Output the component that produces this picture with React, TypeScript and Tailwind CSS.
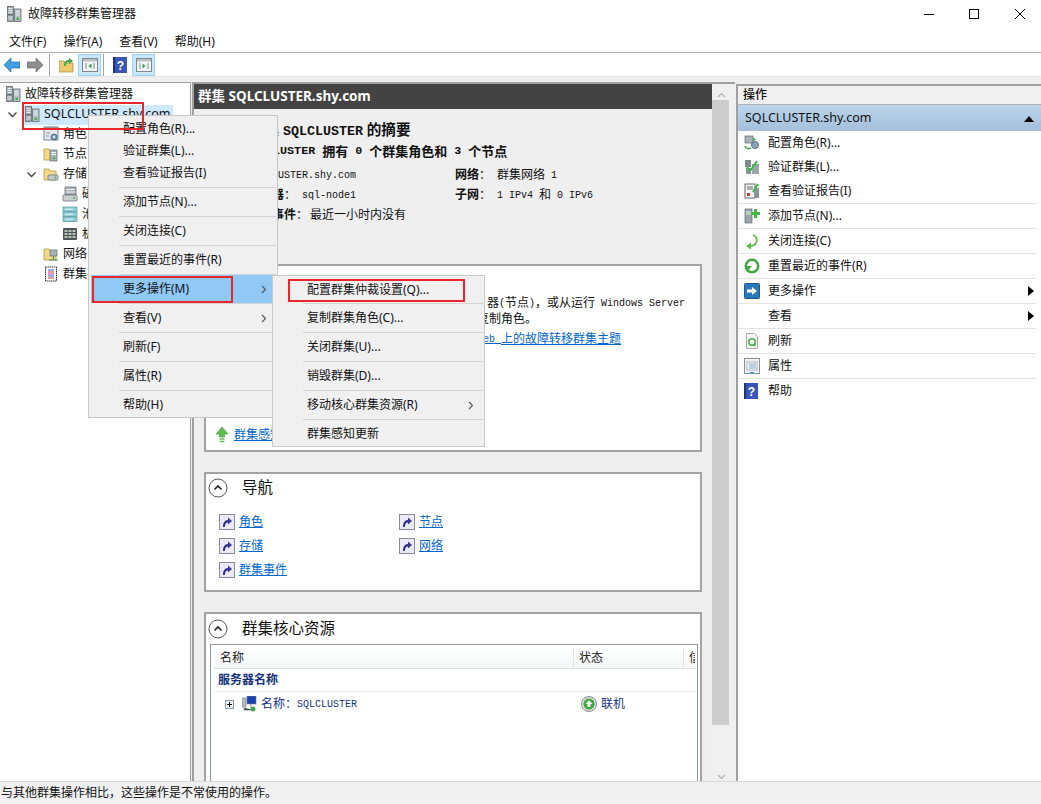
import React from "react";

const Srv = ({ s = 16 }: { s?: number }) => (
  <svg width={s} height={s} viewBox="0 0 16 16">
    <rect x="1.500" y=".5" width="6" height="8" fill="#a5aeb3" stroke="#5f6a70" strokeWidth=".8" />
    <rect x="8.500" y="3" width="6.500" height="12.500" fill="#b8c0c4" stroke="#5f6a70" strokeWidth=".8" />
    <rect x="1.500" y="9" width="6" height="6.500" fill="#9fa8ad" stroke="#5f6a70" strokeWidth=".8" />
    <path d="M2.500 2.500h4M2.500 4.500h4M2.500 6.500h4M9.500 5h4.500M9.500 7h4.500M9.500 9h4.500M2.500 11h4M2.500 13h4" stroke="#eef2f4" strokeWidth=".9" />
    <rect x="10.500" y="11.500" width="2.500" height="2.500" fill="#4caf50" />
  </svg>
);
const Folder = ({ children }: { children?: React.ReactNode }) => (
  <svg width="16" height="16" viewBox="0 0 16 16">
    <path d="M1 3h5l1 2h6v9H1z" fill="#f2d98a" stroke="#b9973f" strokeWidth=".8" />
    {children}
  </svg>
);
const FolderSrv = () => (
  <Folder>
    <rect x="7" y="4" width="7" height="11" fill="#a8b3b8" stroke="#5f6a70" strokeWidth=".7" />
    <path d="M8 6.500h5M8 8.500h5" stroke="#eef2f4" />
    <rect x="10" y="11" width="2" height="2" fill="#4caf50" />
  </Folder>
);
const FolderDisk = () => (
  <Folder>
    <rect x="5" y="9" width="10" height="5" rx="1" fill="#c5cbce" stroke="#5f6a70" strokeWidth=".7" />
    <circle cx="12.500" cy="11.500" r=".9" fill="#4caf50" />
  </Folder>
);
const Roles = () => (
  <svg width="16" height="16" viewBox="0 0 16 16">
    <rect x="1" y="1" width="14" height="13" fill="#e5e9ec" stroke="#7c878d" />
    <rect x="1" y="1" width="14" height="3" fill="#8b969c" />
    <circle cx="11" cy="11" r="3" fill="#7aa0c0" stroke="#4b6e8c" />
    <circle cx="11" cy="11" r="1" fill="#fff" />
    <path d="M3 7h4M3 10h3" stroke="#8b969c" />
  </svg>
);
const Disks = () => (
  <svg width="16" height="16" viewBox="0 0 16 16">
    <rect x="3" y="1" width="11" height="8" fill="#a8b0b5" stroke="#5f6a70" strokeWidth=".7" />
    <path d="M4 3.500h9M4 6h9" stroke="#eef2f4" />
    <rect x="1" y="9" width="14" height="6" rx="1" fill="#c9ced1" stroke="#5f6a70" strokeWidth=".7" />
    <circle cx="12" cy="12" r="1" fill="#4caf50" />
  </svg>
);
const Pools = () => (
  <svg width="16" height="16" viewBox="0 0 16 16">
    {[1, 6, 11].map((y) => (
      <g key={y}>
        <rect x="1" y={y} width="14" height="4.500" fill="#8fcbd4" stroke="#5c9aa6" strokeWidth=".7" />
        <path d={`M3 ${y + 2.2}h8`} stroke="#e7f6f8" />
      </g>
    ))}
  </svg>
);
const Enclosure = () => (
  <svg width="16" height="16" viewBox="0 0 16 16">
    <rect x="1" y="2" width="14" height="12" rx="1" fill="#4e5558" />
    {[3, 7, 11].map((x) =>
      [4, 7, 10].map((y) => <rect key={`${x}${y}`} x={x - 0.5} y={y} width="3" height="2" fill="#b9c2b2" />)
    )}
  </svg>
);
const FolderNet = () => (
  <Folder>
    <rect x="7" y="4" width="7" height="6" fill="#a8b3b8" stroke="#5f6a70" strokeWidth=".7" />
    <path d="M10.500 10v3M6 14h9" stroke="#3e9a4a" strokeWidth="1.200" />
  </Folder>
);
const Events = () => (
  <svg width="16" height="16" viewBox="0 0 16 16">
    <rect x="2.500" y="1" width="11" height="14" fill="#fff" stroke="#333" strokeDasharray="1.500 .6" />
    <path d="M5 4h6" stroke="#3a5fc8" />
    <path d="M5 6h6" stroke="#d0392f" />
    <path d="M5 8h6" stroke="#b03ab0" />
    <path d="M5 10h6" stroke="#3a5fc8" />
    <path d="M5 12h6" stroke="#d0392f" />
  </svg>
);
const Chevron = ({ right = false }: { right?: boolean }) => (
  <svg width="9" height="9" viewBox="0 0 9 9">
    {right ? (
      <path d="M3 1l3.500 3.500L3 8" fill="none" stroke="#555" strokeWidth="1.100" />
    ) : (
      <path d="M.5 2.500L4.500 6.500 8.500 2.500" fill="none" stroke="#444" strokeWidth="1.400" />
    )}
  </svg>
);
const Pane = ({ dir }: { dir: "l" | "r" }) => (
  <svg width="16" height="14" viewBox="0 0 16 14">
    <rect x=".5" y=".5" width="15" height="13" fill="#f4f6f7" stroke="#7c878d" />
    <rect x="1" y="1" width="14" height="2.500" fill="#b7c1c6" />
    <path d="M3 6h2M3 8h2M3 10h2M11 6h2M11 8h2M11 10h2" stroke="#7c878d" />
    <path d={dir === "l" ? "M9.500 5.500v5L6.500 8z" : "M6.500 5.500v5L9.500 8z"} fill="#2fa043" />
  </svg>
);
const Help = () => (
  <svg width="14" height="16" viewBox="0 0 14 16">
    <rect width="14" height="16" fill="#3a55b8" />
    <rect x="0" y="0" width="2" height="16" fill="#22337c" />
    <text x="7.500" y="12.500" fontSize="12" fontWeight="700" fill="#fff" textAnchor="middle" fontFamily="Liberation Sans">?</text>
  </svg>
);
const ToolBtn = ({ dir }: { dir: "l" | "r" }) => (
  <div className="flex h-[22px] w-[23px] items-center justify-center border border-[#99d1ff] bg-[#cce8ff]">
    <Pane dir={dir} />
  </div>
);
const Sep = () => <div className="h-[22px] w-px bg-[#a0a0a0]" />;

const TreeRow = ({ pad, chev, icon, label, big }: { pad: string; chev?: boolean; icon: React.ReactNode; label: string; big?: boolean }) => (
  <div className={`flex h-5 items-center whitespace-nowrap ${pad}`}>
    {chev !== undefined && (
      <span className="mr-[7px] flex w-[10px] justify-center">{chev && <Chevron />}</span>
    )}
    <span className="flex w-4 shrink-0">{icon}</span>
    <span className={`ml-[4px] flex h-5 items-center text-[#111] ${big ? "text-[12.5px]" : "text-[12px]"}`}>{label}</span>
  </div>
);

const MenuRow = ({ label, arrow, hl, sep = true, h = "h-[28px]" }: { label: string; arrow?: boolean; hl?: boolean; sep?: boolean; h?: string }) => (
  <>
    <div className={`mx-[2px] flex items-center justify-between pl-[32px] pr-[7px] text-[12px] text-[#111] ${h} ${hl ? "bg-[#90c8f6]" : ""}`}>
      <span>{label}</span>
      {arrow && <Chevron right />}
    </div>
    {sep && <div className="ml-[30px] mr-[1px] h-px bg-[#d4d4d4]" />}
  </>
);

const Mono = ({ children, b }: { children: React.ReactNode; b?: boolean }) => (
  <span className={`font-['Liberation_Mono',monospace] ${b ? "text-[11.7px] font-bold" : "text-[10px]"}`}>{children}</span>
);

const Collapse = () => (
  <svg width="20" height="20" viewBox="0 0 20 20">
    <circle cx="10" cy="10" r="9" fill="#fff" stroke="#555" />
    <path d="M6.500 11.500L10 8l3.500 3.500" fill="none" stroke="#222" strokeWidth="1.600" />
  </svg>
);
const CardHead = ({ title }: { title: string }) => (
  <div className="flex h-[26px] items-center pl-[1px] text-[15.5px] text-[#111]">
    <Collapse />
    <span className="ml-[14px]">{title}</span>
  </div>
);
const Shortcut = () => (
  <svg width="16" height="16" viewBox="0 0 16 16">
    <rect x=".5" y=".5" width="15" height="15" fill="#eceaf6" stroke="#8a8a94" />
    <path d="M4 13c0-5 2-7 5-7V3.500L13 7l-4 3.500V8.500c-2 0-3 1.500-3 4.500z" fill="#37378f" />
  </svg>
);
const NavLink = ({ label }: { label: string }) => (
  <div className="flex h-6 items-center">
    <Shortcut />
    <a className="ml-[4px] text-[12px] text-[#0066cc] underline">{label}</a>
  </div>
);

const Act = ({ icon, label, arrow, sep = true }: { icon?: React.ReactNode; label: string; arrow?: boolean; sep?: boolean }) => (
  <>
    <div className="flex h-[24px] items-center pl-[6px] pr-[7px] text-[12px] text-[#111]">
      <span className="flex w-4 shrink-0">{icon}</span>
      <span className="ml-[8px] flex-1">{label}</span>
      {arrow && (
        <svg width="6" height="10" viewBox="0 0 6 10">
          <path d="M0 0l6 5-6 5z" fill="#000" />
        </svg>
      )}
    </div>
    {sep && <div className="mr-[5px] h-px bg-[#e3e3e3]" />}
  </>
);

const A = {
  role: (
    <svg width="16" height="16" viewBox="0 0 16 16">
      <rect x="1" y="1" width="8" height="7" fill="#a8b3b8" stroke="#5f6a70" strokeWidth=".7" />
      <circle cx="11" cy="10" r="3.500" fill="#8ba4b8" stroke="#566f82" />
      <path d="M1 11c1 3 4 3 6 2" fill="none" stroke="#3ea84b" strokeWidth="1.600" />
      <path d="M9 2.500l3 2-3 2z" fill="#3ea84b" />
    </svg>
  ),
  val: (
    <svg width="16" height="16" viewBox="0 0 16 16">
      <rect x="1" y="1" width="6" height="7" fill="#7f8a90" />
      <rect x="8" y="5" width="7" height="10" fill="#9aa4a9" />
      <rect x="2" y="9" width="5" height="6" fill="#8a959a" />
      <path d="M3 8l3 4 7-10" fill="none" stroke="#3fb54a" strokeWidth="2" />
    </svg>
  ),
  rep: (
    <svg width="16" height="16" viewBox="0 0 16 16">
      <rect x="1" y="1" width="10" height="14" fill="#f5f5f5" stroke="#666" />
      <path d="M3 4h6M3 6h6" stroke="#666" />
      <rect x="3" y="10" width="3" height="3" fill="#d0392f" />
      <rect x="10" y="5" width="5" height="10" fill="#8a959a" />
      <path d="M9 9l5-8" stroke="#3fb54a" strokeWidth="2" />
    </svg>
  ),
  add: (
    <svg width="16" height="16" viewBox="0 0 16 16">
      <rect x="1" y="1" width="7" height="14" fill="#9aa4a9" stroke="#5f6a70" strokeWidth=".7" />
      <path d="M2 4h5M2 6h5" stroke="#eef2f4" />
      <path d="M10 1h3v3h3v3h-3v3h-3V7H7V4h3z" fill="#43b649" />
    </svg>
  ),
  close: (
    <svg width="16" height="16" viewBox="0 0 16 16">
      <path d="M9 2c3 1 5 4 3 8-1 2-3 3-6 3" fill="none" stroke="#5dbb46" strokeWidth="1.700" />
      <path d="M7 9.500v7L2 13z" fill="#5dbb46" />
    </svg>
  ),
  reset: (
    <svg width="16" height="16" viewBox="0 0 16 16">
      <circle cx="8" cy="8" r="6.200" fill="none" stroke="#43a93f" strokeWidth="2.600" />
      <path d="M1 8h7L3 14z" fill="#43a93f" />
      <path d="M6 8l4-4" stroke="#fff" />
    </svg>
  ),
  more: (
    <svg width="16" height="16" viewBox="0 0 16 16">
      <rect x=".5" y=".5" width="15" height="15" rx="1" fill="#2b78b8" stroke="#1b5a8f" />
      <path d="M3 6.500h5V4l5 4-5 4V9.500H3z" fill="#fff" />
    </svg>
  ),
  refresh: (
    <svg width="16" height="16" viewBox="0 0 16 16">
      <path d="M2.500.5h8l3 3v12h-11z" fill="#f6f6f6" stroke="#aaa" />
      <circle cx="8" cy="9" r="3.200" fill="none" stroke="#49b04a" strokeWidth="1.600" />
      <path d="M9 12l3-1-1 3z" fill="#49b04a" />
    </svg>
  ),
  prop: (
    <svg width="16" height="16" viewBox="0 0 16 16">
      <rect x=".5" y=".5" width="15" height="15" fill="#eef1f3" stroke="#8a8f94" />
      <rect x="3" y="4" width="10" height="8" fill="#fff" stroke="#b0b6bb" />
      <path d="M5 6h7M5 8h7M5 10h7" stroke="#7f9fbf" />
      <rect x="6" y="14" width="4" height="1" fill="#35a0e0" />
    </svg>
  ),
};

const Red = ({ pos }: { pos: string }) => (
  <div className={`pointer-events-none absolute border-2 border-[#e8262b] ${pos}`} />
);

export default function App() {
  return (
    <div className="relative flex h-[804px] w-[1041px] flex-col overflow-hidden bg-white font-['Noto_Sans','Noto_Sans_CJK_SC',sans-serif]">
      {/* title bar */}
      <div className="flex h-[28px] items-center pl-[6px] pr-[16px]">
        <Srv />
        <span className="ml-[6px] flex-1 text-[12px] text-[#111]">故障转移群集管理器</span>
        <svg width="101" height="12" viewBox="0 0 101 12">
          <path d="M0 6.500h10" stroke="#000" />
          <rect x="45.500" y="1.500" width="9" height="9" fill="none" stroke="#000" />
          <path d="M91 1l10 10M101 1L91 11" stroke="#000" />
        </svg>
      </div>
      {/* menu */}
      <div className="flex h-[25px] items-center gap-[17px] border-b border-[#b4b4b4] pl-[9px] pt-[3px] text-[12px] text-[#111]">
        <span>文件(F)</span>
        <span>操作(A)</span>
        <span>查看(V)</span>
        <span>帮助(H)</span>
      </div>
      {/* toolbar */}
      <div className="flex h-[23px] items-center pl-[4px]">
        <svg width="16" height="14" viewBox="0 0 16 14">
          <path d="M0 7l7-7v4h9v6H7v4z" fill="#3f9fe0" stroke="#1f6fb0" strokeWidth=".7" />
        </svg>
        <svg className="ml-[7px]" width="16" height="14" viewBox="0 0 16 14">
          <path d="M16 7L9 0v4H0v6h9v4z" fill="#8f8f8f" stroke="#666" strokeWidth=".7" />
        </svg>
        <div className="ml-[6px]"><Sep /></div>
        <div className="ml-[9px] flex w-[15px]">
          <svg width="15" height="16" viewBox="0 0 15 16">
            <path d="M0 4h5l1 2h8v9H0z" fill="#ecca6e" stroke="#a9853a" strokeWidth=".7" />
            <path d="M5 9c0-4 2-6 5-6V1l4 3-4 3V5C8 5 7 7 6.500 9z" fill="#3da83f" />
          </svg>
        </div>
        <div className="ml-[4px]"><ToolBtn dir="l" /></div>
        <div className="ml-[2px]"><Sep /></div>
        <div className="ml-[9px] flex"><Help /></div>
        <div className="ml-[5px]"><ToolBtn dir="r" /></div>
      </div>
      {/* main */}
      <div className="flex min-h-0 flex-1 border-t border-[#e6e6e6] bg-[#f0f0f0] pt-[5px]">
        {/* tree */}
        <div className="w-[191px] shrink-0 border-r border-t border-[#a0a0a0] bg-white pt-[1px]">
          <div className="flex flex-col">
            <TreeRow pad="pl-[5px]" icon={<Srv />} label="故障转移群集管理器" />
            <div className="relative">
              <div className="absolute left-[23px] top-[1px] h-5 w-[150px] bg-[#cde8ff]" />
              <div className="relative">
                <TreeRow pad="pl-[7px]" chev icon={<Srv />} label="SQLCLUSTER.shy.com" big />
              </div>
            </div>
            <TreeRow pad="pl-[26px]" chev={false} icon={<Roles />} label="角色" />
            <TreeRow pad="pl-[26px]" chev={false} icon={<FolderSrv />} label="节点" />
            <TreeRow pad="pl-[26px]" chev icon={<FolderDisk />} label="存储" />
            <TreeRow pad="pl-[45px]" chev={false} icon={<Disks />} label="磁盘" />
            <TreeRow pad="pl-[45px]" chev={false} icon={<Pools />} label="池" />
            <TreeRow pad="pl-[45px]" chev={false} icon={<Enclosure />} label="机柜" />
            <TreeRow pad="pl-[26px]" chev={false} icon={<FolderNet />} label="网络" />
            <TreeRow pad="pl-[26px]" chev={false} icon={<Events />} label="群集事件" />
          </div>
        </div>
        {/* center */}
        <div className="ml-[1px] flex w-[543px] shrink-0 overflow-hidden border-l-2 border-t-2 border-[#a0a0a0]">
          <div className="flex w-[518px] shrink-0 flex-col">
            <div className="flex h-[25px] shrink-0 items-center bg-[#434343] pl-[4px] text-[13.5px] font-bold text-white">
              群集 SQLCLUSTER.shy.com
            </div>
            <div className="flex flex-col bg-[#efefef] px-[10px]">
              <div className="h-[155px] shrink-0 pl-[8px] text-[12px] text-[#111]">
                <div className="flex h-[20px] items-center pl-[38px] pt-[21px] text-[14.6px] font-bold">
                  <span className="whitespace-nowrap">群集 <span className="font-['Liberation_Mono',monospace] text-[13.33px]">SQLCLUSTER</span> 的摘要</span>
                </div>
                <div className="mt-[12px] flex h-[20px] items-center whitespace-nowrap text-[13px] font-bold">
                  群集<Mono b>&nbsp;SQLCLUSTER&nbsp;</Mono>拥有<Mono b>&nbsp;0&nbsp;</Mono>个群集角色和<Mono b>&nbsp;3&nbsp;</Mono>个节点
                </div>
                <div className="mt-[3px] grid grid-cols-[243px_1fr] whitespace-nowrap">
                  <div className="flex h-5 items-center"><b>名称</b>：<Mono>SQLCLUSTER.shy.com</Mono></div>
                  <div className="flex h-5 items-center"><b>网络</b>：<Mono>&nbsp;</Mono>群集网络<Mono>&nbsp;1</Mono></div>
                  <div className="flex h-5 items-center"><b>当前主服务器</b>：<Mono>&nbsp;sql-node1</Mono></div>
                  <div className="flex h-5 items-center"><b>子网</b>：<Mono>&nbsp;1 IPv4&nbsp;</Mono>和<Mono>&nbsp;0 IPv6</Mono></div>
                  <div className="flex h-5 items-center"><b>最近的群集事件</b>：<span className="ml-[2px]">最近一小时内没有</span></div>
                </div>
              </div>
              <div className="h-[188px] shrink-0 border-2 border-[#a3a3a3] bg-white pl-[1px] pt-[3px] text-[12px] text-[#111]">
                <CardHead title="配置" />
                <div className="whitespace-nowrap pl-[270px]">
                  <div className="ml-[10px] flex h-[16px] items-center">器<Mono>(</Mono>节点<Mono>)</Mono>，或从运行<Mono>&nbsp;Windows Server</Mono></div>
                  <div className="flex h-[16px] items-center">复制角色。</div>
                  <div className="mt-[4px] flex h-[16px] items-center text-[#0066cc] underline"><span className="font-['Liberation_Mono',monospace] text-[10px]">Web&nbsp;</span>上的故障转移群集主题</div>
                </div>
                <div className="mt-[79px] flex items-center pl-[8px]">
                  <svg width="14" height="16" viewBox="0 0 14 16">
                    <path d="M7 0l6 7H9.500v3h-5V7H1z" fill="#5cc04c" stroke="#3a9a32" strokeWidth=".6" />
                    <path d="M4.500 12h5M4.500 14.500h5" stroke="#5cc04c" strokeWidth="1.400" />
                  </svg>
                  <a className="ml-[5px] text-[12px] text-[#0066cc] underline">群集感知更新</a>
                </div>
              </div>
              <div className="mt-[20px] h-[120px] shrink-0 border-2 border-[#a3a3a3] bg-white pl-[1px] pt-[1px]">
                <CardHead title="导航" />
                <div className="mt-[9px] grid grid-cols-[180px_1fr] pl-[12px]">
                  <NavLink label="角色" />
                  <NavLink label="节点" />
                  <NavLink label="存储" />
                  <NavLink label="网络" />
                  <NavLink label="群集事件" />
                </div>
              </div>
              <div className="mt-[20px] h-[180px] shrink-0 border-2 border-[#a3a3a3] bg-white pl-[1px] pr-[2px] pt-[2px]">
                <CardHead title="群集核心资源" />
                <div className="ml-[3px] mt-[2px] h-[150px] border border-[#8b979d] pl-[3px] pr-[1px] pt-[3px] text-[12px]">
                  <div className="flex h-[21px] overflow-hidden border-b border-[#d9dfe3] bg-gradient-to-b from-white to-[#f5f6f7] text-[#222]">
                    <div className="flex w-[360px] shrink-0 items-center border-r border-[#e3e3e3] pl-[6px]">名称</div>
                    <div className="flex w-[110px] shrink-0 items-center border-r border-[#e3e3e3] pl-[5px]">状态</div>
                    <div className="flex w-[11px] items-center overflow-hidden whitespace-nowrap pl-[5px]">信息</div>
                  </div>
                  <div className="flex h-[23px] items-center border-b border-[#e6edf2] pl-[4px] font-bold text-[#14337a]">服务器名称</div>
                  <div className="flex h-[24px] items-center text-[#14337a]">
                    <div className="flex w-[360px] items-center pl-[11px]">
                      <span className="flex h-[9px] w-[9px] items-center justify-center border border-[#8a9aa5] bg-[#eef2f5]">
                        <svg width="7" height="7" viewBox="0 0 7 7"><path d="M1 3.500h5M3.500 1v5" stroke="#000" /></svg>
                      </span>
                      <span className="ml-[8px] flex">
                        <svg width="15" height="16" viewBox="0 0 15 16">
                          <rect x="0" y="2" width="4" height="9" fill="#b4bcc0" stroke="#6e7a80" strokeWidth=".6" />
                          <rect x="5" y="0" width="9" height="8" fill="#1c3fb0" stroke="#6e7a80" strokeWidth=".6" />
                          <path d="M2 12v2h10M9 8v4" stroke="#999" />
                          <circle cx="11" cy="13" r="2.500" fill="#3fa84a" />
                        </svg>
                      </span>
                      <span className="ml-[4px] flex items-center">名称：<Mono>SQLCLUSTER</Mono></span>
                    </div>
                    <div className="flex items-center pl-[7px]">
                      <svg width="16" height="16" viewBox="0 0 16 16">
                        <circle cx="8" cy="8" r="7.500" fill="#dcdcdc" stroke="#8f8f8f" />
                        <circle cx="8" cy="8" r="5.500" fill="#3ea83f" />
                        <path d="M8 4l3.500 4H9.500v3h-3V8H4.500z" fill="#fff" />
                      </svg>
                      <span className="ml-[4px]">联机</span>
                    </div>
                  </div>
                </div>
              </div>
            </div>
          </div>
          {/* scrollbar */}
          <div className="flex w-[18px] shrink-0 flex-col bg-[#f0f0f0]">
            <div className="flex h-[14px] items-end justify-center">
              <svg width="9" height="6" viewBox="0 0 9 6"><path d="M1 5l3.500-3.500L8 5" fill="none" stroke="#b0b0b0" strokeWidth="1.200" /></svg>
            </div>
            <div className="mt-[2px] h-[625px] w-[17px] bg-[#cdcdcd]" />
            <div className="mt-[49px] flex justify-center">
              <svg width="9" height="6" viewBox="0 0 9 6"><path d="M1 1l3.500 3.500L8 1" fill="none" stroke="#b0b0b0" strokeWidth="1.200" /></svg>
            </div>
          </div>
        </div>
        {/* actions */}
        <div className="ml-[1px] mt-[2px] flex-1 border-l-2 border-t-2 border-[#a0a0a0] bg-white">
          <div className="flex h-[19px] items-center border-b border-[#b0b0b0] bg-[#f0f0f0] pl-[5px] text-[12px] font-medium text-[#111]">操作</div>
          <div className="flex h-[26px] items-center justify-between bg-gradient-to-b from-[#bcd5ec] to-[#a3bfdb] px-[7px] pt-[1px] text-[12.5px] text-[#111]">
            <span>SQLCLUSTER.shy.com</span>
            <svg width="10" height="6" viewBox="0 0 10 6"><path d="M5 0l5 6H0z" fill="#000" /></svg>
          </div>
          <Act icon={A.role} label="配置角色(R)..." sep={false} />
          <Act icon={A.val} label="验证群集(L)..." sep={false} />
          <Act icon={A.rep} label="查看验证报告(I)" />
          <Act icon={A.add} label="添加节点(N)..." />
          <Act icon={A.close} label="关闭连接(C)" />
          <Act icon={A.reset} label="重置最近的事件(R)" />
          <Act icon={A.more} label="更多操作" arrow />
          <Act label="查看" arrow />
          <Act icon={A.refresh} label="刷新" />
          <Act icon={A.prop} label="属性" />
          <Act icon={<Help />} label="帮助" sep={false} />
        </div>
      </div>
      {/* status */}
      <div className="flex h-[23px] shrink-0 items-center border-t border-[#d8d8d8] bg-[#f0f0f0] pl-[1px] text-[12px] text-[#111]">
        与其他群集操作相比，这些操作是不常使用的操作。
      </div>

      {/* context menus */}
      <div className="absolute left-[88px] top-[115px] h-[303px] w-[190px] border border-[#c8c8c8] bg-[#f0f0f0] pt-[2px]">
        <MenuRow label="配置角色(R)..." sep={false} h="h-[22px]" />
        <MenuRow label="验证群集(L)..." sep={false} h="h-[22px]" />
        <MenuRow label="查看验证报告(I)" sep={false} h="h-[22px]" />
        <div className="ml-[30px] mr-[1px] mt-[3px] h-px bg-[#d4d4d4]" />
        <MenuRow label="添加节点(N)..." />
        <MenuRow label="关闭连接(C)" />
        <MenuRow label="重置最近的事件(R)" />
        <MenuRow label="更多操作(M)" arrow hl />
        <MenuRow label="查看(V)" arrow />
        <MenuRow label="刷新(F)" />
        <MenuRow label="属性(R)" />
        <MenuRow label="帮助(H)" sep={false} h="h-[27px]" />
      </div>
      <div className="absolute left-[272px] top-[275px] h-[172px] w-[213px] border border-[#c8c8c8] bg-[#f0f0f0]">
        <MenuRow label="配置群集仲裁设置(Q)..." h="h-[27px]" />
        <MenuRow label="复制群集角色(C)..." />
        <MenuRow label="关闭群集(U)..." />
        <MenuRow label="销毁群集(D)..." />
        <MenuRow label="移动核心群集资源(R)" arrow />
        <MenuRow label="群集感知更新" sep={false} />
      </div>
      <Red pos="left-[22px] top-[102px] h-[28px] w-[122px]" />
      <Red pos="left-[92px] top-[276px] h-[27px] w-[141px]" />
      <Red pos="left-[288px] top-[279px] h-[23px] w-[177px]" />
    </div>
  );
}
